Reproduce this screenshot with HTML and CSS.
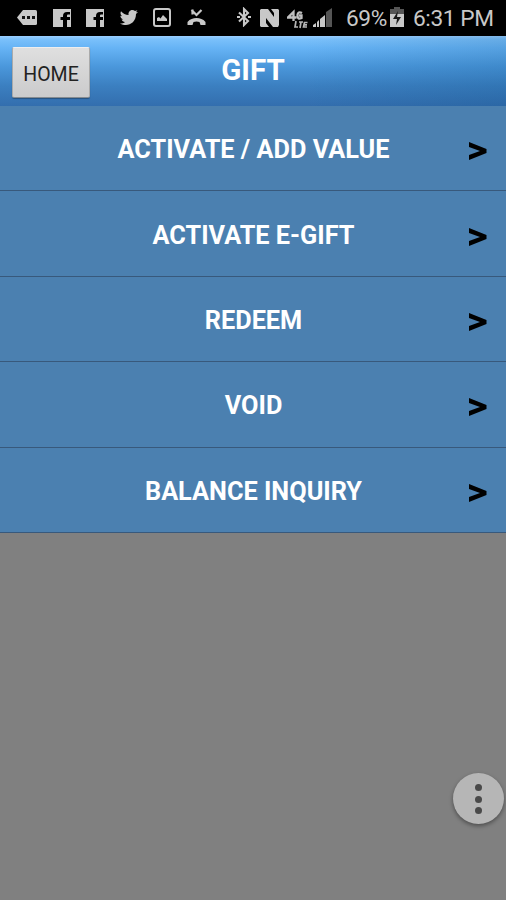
FILE: index.html
```html
<!DOCTYPE html>
<html lang="en">
<head>
<meta charset="utf-8">
<title>Gift</title>
<link rel="stylesheet" href="styles.css">
</head>
<body>
<div class="screen">
  <div class="status">
    <div class="notifications">
      <svg width="20" height="20" viewBox="0 0 20 20"><path fill="#c8c8c8" d="M6 3H18.500Q20 3 20 4.500V16.500Q20 18 18.500 18H6L0 10.500Z"/><path fill="#111" d="M5 9h3v3H5zM10 9h3v3h-3zM15 9h3v3h-3z"/></svg>
      <svg width="18" height="20" viewBox="0 0 18 20"><path fill="#c8c8c8" d="M0 2h18v18h-4v-7h3v-3h-3V8.500q0-1 1-1h2V5h-3q-4 0-4 4v1H7.500v3H10v7H0z"/></svg>
      <svg width="18" height="20" viewBox="0 0 18 20"><path fill="#c8c8c8" d="M0 2h18v18h-4v-7h3v-3h-3V8.500q0-1 1-1h2V5h-3q-4 0-4 4v1H7.500v3H10v7H0z"/></svg>
      <svg width="18" height="20" viewBox="0 0 18 20"><path fill="#c8c8c8" d="M18 5l-2 2c0 7-5 11-10 11-2 0-4-.5-6-1.600 2 0 4-.4 5-1.500-1.600 0-3-1-3.400-2.500h1.600C1.400 12 .4 10.500.4 8.800l1.600.4C.5 8 .1 6 1 4.300c2 2.300 4.500 3.600 7.600 3.800C8 5.300 10 3 12.300 3q1.600 0 2.700 1.100L17.400 3.300 16 5.300z"/></svg>
      <svg width="18" height="20" viewBox="0 0 18 20"><rect x="1" y="2" width="16" height="17" rx="2" fill="none" stroke="#c8c8c8" stroke-width="2"/><path fill="#c8c8c8" d="M4 14v-3l2-1 1.500 1.500L10 8l2 2 1 1 1 1v2z"/></svg>
      <svg width="19" height="20" viewBox="0 0 19 20"><path fill="none" stroke="#c8c8c8" stroke-width="2.200" d="M5.500 2.500v5M4.500 3l5 5 5-5"/><path fill="#c8c8c8" d="M.5 15C3 12 6 11 9.500 11s6.500 1 9 4v3h-5l-1-3q-3-1-6 0l-1 3h-5z"/></svg>
    </div>
    <div class="system">
      <svg class="bluetooth" width="14" height="20" viewBox="0 0 14 20"><path fill="none" stroke="#c8c8c8" stroke-width="2.100" d="M2 5.500l9 8.500-4 4V2l4 4-9 8.500M0 10h3M11 10h3"/></svg>
      <svg class="nfc" width="19" height="20" viewBox="0 0 19 20"><path fill="#c8c8c8" d="M1 2h7l6 8V6l-3-4h7l1 1v15l-1 2h-5l-7-9v5l3 4H1l-1-1V3z"/></svg>
      <svg class="lte" width="21" height="22" viewBox="0 0 21 22"><g fill="none" stroke="#c0c0c0" stroke-width="2.300"><path d="M6.500 14V5L1 10.500h8.500M15 6q-4-2-4.500 2 0 5 4 3V8.500h-2.500"/></g><path fill="none" stroke="#b5b5b5" stroke-width="1.700" d="M9 14l-1 6h3M12 15h4M14 15l-1 6M20.500 15.500h-3l-1 4.500h3.500M17 17.800h3"/></svg>
      <svg class="signal" width="20" height="20" viewBox="0 0 20 20"><path fill="#555" d="M13 5l6-4v19h-6z"/><path fill="#c8c8c8" d="M0 18l3-2v4H0zM4 15l2-2v7H4zM7 12l5-4v12H7z"/></svg>
      <span class="percent">69%</span>
      <svg class="battery" width="14" height="20" viewBox="0 0 14 20"><path fill="#555" d="M4 0h6v2h4v6H0V2h4z"/><path fill="#c8c8c8" d="M0 7h14v13H0z"/><path fill="#181818" d="M8 4L3 12h4l-1 6 5-8H7z"/></svg>
      <span class="time">6:31 PM</span>
    </div>
  </div>
  <header class="header">
    <button class="home">HOME</button>
    <h1 class="title">GIFT</h1>
  </header>
  <ul class="menu">
    <li class="row"><span class="label">ACTIVATE / ADD VALUE</span><svg class="arrow" viewBox="0 0 18 18"><path d="M0 0L17.500 7v4L0 18v-5L11 9 0 5z"/></svg></li>
    <li class="row"><span class="label">ACTIVATE E-GIFT</span><svg class="arrow" viewBox="0 0 18 18"><path d="M0 0L17.500 7v4L0 18v-5L11 9 0 5z"/></svg></li>
    <li class="row"><span class="label">REDEEM</span><svg class="arrow" viewBox="0 0 18 18"><path d="M0 0L17.500 7v4L0 18v-5L11 9 0 5z"/></svg></li>
    <li class="row"><span class="label">VOID</span><svg class="arrow" viewBox="0 0 18 18"><path d="M0 0L17.500 7v4L0 18v-5L11 9 0 5z"/></svg></li>
    <li class="row"><span class="label">BALANCE INQUIRY</span><svg class="arrow" viewBox="0 0 18 18"><path d="M0 0L17.500 7v4L0 18v-5L11 9 0 5z"/></svg></li>
  </ul>
  <button class="more" aria-label="More options"><i class="dot"></i><i class="dot"></i><i class="dot"></i></button>
</div>
</body>
</html>
```
FILE: styles.css
```css
* { box-sizing: border-box; }
body { margin: 0; font-family: Roboto, "Liberation Sans", sans-serif; }
.screen { position: relative; width: 506px; height: 900px; background: #808080; overflow: hidden; }
.status { display: flex; height: 36px; background: #000; color: #c8c8c8; }
.notifications { display: flex; gap: 15.500px; padding: 7px 0 0 17px; }
.system { display: flex; flex: 1; padding-top: 7px; margin-left: 31px; }
.status svg { flex: none; }
.nfc { margin-left: 9px; }
.lte { margin-left: 8.500px; }
.signal { margin-left: 5px; }
.percent, .time { font-size: 22.700px; line-height: 24px; white-space: nowrap; }
.percent { width: 44px; margin-left: 13px; letter-spacing: -0.4px; }
.time { margin-left: 9px; letter-spacing: -0.4px; }
.header { display: grid; grid-template-columns: 1fr auto 1fr; height: 70px; padding-top: 11px; background: linear-gradient(90deg, rgba(0,65,120,0) 60%, rgba(0,65,120,.16)), linear-gradient(#9ccfff 0, #7bc1fb 3px, #66b3f5 12px, #4b98dc 30px, #3b7fc0 50px, #336eae 100%); }
.home { width: 78px; height: 51px; margin-left: 12px; padding: 4px 0 0; border: 1px solid #aaa; border-top-color: #eee; border-bottom: 1px solid #858b91; border-radius: 2px; background: linear-gradient(#dfdfdf, #cbcbcc); color: #222; font: 19.500px/24px Roboto, sans-serif; box-shadow: 0 1px 1px rgba(0,0,0,.3); }
.title { margin: 5px 0; font-size: 29.500px; line-height: 36px; font-weight: 700; color: #fff; }
.menu { margin: 0; padding: 0; list-style: none; }
.row { display: grid; grid-template-columns: 41px 1fr 40px; height: 85.400px; align-items: center; background: #4b80b0; border-bottom: 1px solid #38597c; }
.label { grid-column: 2; padding-top: 4px; text-align: center; font-size: 25.300px; line-height: 30px; font-weight: 700; color: #fff; white-space: nowrap; }
.arrow { width: 18px; height: 18px; margin: 6px 0 0 3px; fill: #000; }
.more { position: absolute; left: 453px; top: 773px; width: 51px; height: 51px; padding: 1px 0 0; border: 0; border-radius: 50%; background: #b6b6b6; display: flex; flex-direction: column; align-items: center; justify-content: center; gap: 4.500px; box-shadow: 0 2px 4px rgba(0,0,0,.4); }
.dot { width: 7px; height: 7px; border-radius: 50%; background: #494949; }
```
